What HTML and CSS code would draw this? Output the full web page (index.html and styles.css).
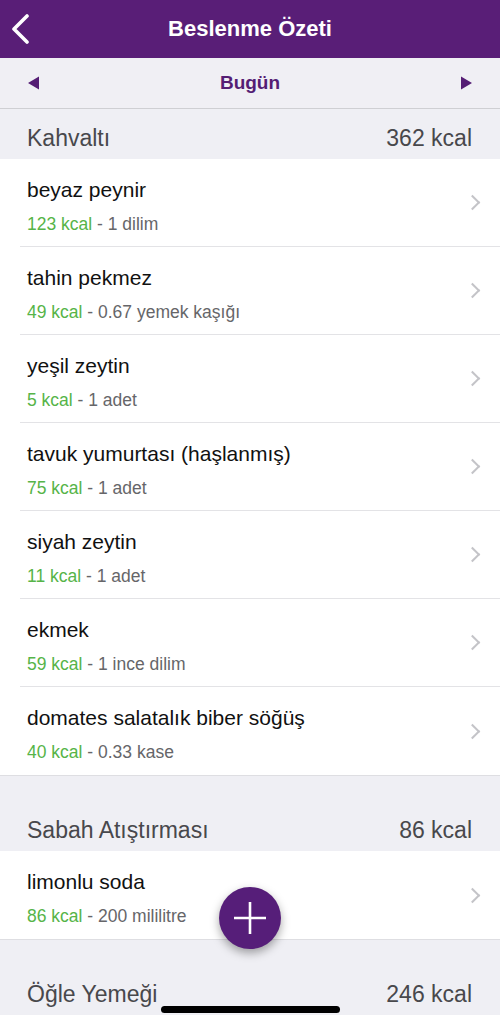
FILE: index.html
```html
<!DOCTYPE html>
<html lang="tr">
<head>
	<meta charset="UTF-8">
	<meta name="viewport" content="width=device-width, initial-scale=1.0">
	<link rel="stylesheet" href="styles.css">
</head>
<body>
	<div id="topbar">
		<a class="back" href="#">
			<svg width="20" height="32" viewBox="0 0 20 32"><path d="M15 2 L2 15 L15 28" fill="none" stroke="#fff" stroke-width="3.6" stroke-linecap="round" stroke-linejoin="round"/></svg>
		</a>
		<h1>Beslenme Özeti</h1>
		<span class="spacer"></span>
	</div>
	<div id="datebar">
		<a class="arrow" href="#"><svg width="12" height="14" viewBox="0 0 12 14"><path d="M0 7 L11 0.5 L11 13.5 Z" fill="#551d74"/></svg></a>
		<span class="day">Bugün</span>
		<a class="arrow" href="#"><svg width="12" height="14" viewBox="0 0 12 14"><path d="M12 7 L1 0.5 L1 13.5 Z" fill="#551d74"/></svg></a>
	</div>

	<div class="meal first">
		<div class="meal-header"><span>Kahvaltı</span><span>362 kcal</span></div>
		<ul class="list">
			<li class="row"><div class="row-inner"><div class="text"><div class="name">beyaz peynir</div><div class="sub"><b>123 kcal</b> - 1 dilim</div></div><span class="chev"></span></div></li>
			<li class="row"><div class="row-inner"><div class="text"><div class="name">tahin pekmez</div><div class="sub"><b>49 kcal</b> - 0.67 yemek kaşığı</div></div><span class="chev"></span></div></li>
			<li class="row"><div class="row-inner"><div class="text"><div class="name">yeşil zeytin</div><div class="sub"><b>5 kcal</b> - 1 adet</div></div><span class="chev"></span></div></li>
			<li class="row"><div class="row-inner"><div class="text"><div class="name">tavuk yumurtası (haşlanmış)</div><div class="sub"><b>75 kcal</b> - 1 adet</div></div><span class="chev"></span></div></li>
			<li class="row"><div class="row-inner"><div class="text"><div class="name">siyah zeytin</div><div class="sub"><b>11 kcal</b> - 1 adet</div></div><span class="chev"></span></div></li>
			<li class="row"><div class="row-inner"><div class="text"><div class="name">ekmek</div><div class="sub"><b>59 kcal</b> - 1 ince dilim</div></div><span class="chev"></span></div></li>
			<li class="row"><div class="row-inner"><div class="text"><div class="name">domates salatalık biber söğüş</div><div class="sub"><b>40 kcal</b> - 0.33 kase</div></div><span class="chev"></span></div></li>
		</ul>
	</div>

	<div class="meal">
		<div class="meal-header"><span>Sabah Atıştırması</span><span>86 kcal</span></div>
		<ul class="list">
			<li class="row"><div class="row-inner"><div class="text"><div class="name">limonlu soda</div><div class="sub"><b>86 kcal</b> - 200 mililitre</div></div><span class="chev"></span></div></li>
		</ul>
	</div>

	<div class="meal">
		<div class="meal-header"><span>Öğle Yemeği</span><span>246 kcal</span></div>
		<ul class="list">
			<li class="row"><div class="row-inner"></div></li>
		</ul>
	</div>

	<a id="add" href="#">
		<svg width="32" height="32" viewBox="0 0 32 32"><path d="M16 0 V32 M0 16 H32" stroke="#fff" stroke-width="2.6"/></svg>
	</a>
	<div id="home"></div>
</body>
</html>
```
FILE: styles.css
```css
body {
	margin: 0;
	height: 1024px;
	overflow: hidden;
	background: #efeff4;
	font-family: 'Liberation Sans', Arial, sans-serif;
	-webkit-font-smoothing: antialiased;
}
a {
	text-decoration: none;
}
#topbar {
	height: 58px;
	background: #591e77;
	display: flex;
	align-items: center;
	padding: 0 12px;
}
#topbar .back {
	width: 40px;
	display: flex;
	align-items: center;
	padding-top: 1px;
}
#topbar .spacer {
	width: 40px;
}
#topbar h1 {
	flex: 1;
	margin: 0;
	text-align: center;
	color: #fff;
	font-size: 22px;
	font-weight: bold;
}
#datebar {
	height: 50px;
	background: #f0eff4;
	border-bottom: 1px solid #cfcfd3;
	display: flex;
	align-items: center;
	justify-content: space-between;
	padding: 0 28px;
}
#datebar .arrow {
	display: flex;
}
#datebar .day {
	color: #551d74;
	font-size: 19px;
	font-weight: bold;
}
.meal {
	margin-top: 25px;
}
.meal.first {
	margin-top: 0;
}
.meal-header {
	height: 50px;
	box-sizing: border-box;
	display: flex;
	justify-content: space-between;
	align-items: flex-end;
	padding: 0 28px 8px 27px;
	color: #48484c;
	font-size: 23px;
	line-height: 26px;
}
.list {
	list-style: none;
	margin: 0;
	padding: 0;
	background: #fff;
	border-bottom: 1px solid #dedee2;
}
.row-inner {
	height: 88px;
	box-sizing: border-box;
	margin-left: 20px;
	padding: 0 22px 0 7px;
	border-bottom: 1px solid #e3e3e6;
	display: flex;
	align-items: center;
}
.row:last-child .row-inner {
	border-bottom: none;
}
.text {
	flex: 1;
	align-self: flex-start;
	padding-top: 17px;
}
.name {
	color: #111;
	font-size: 21px;
	line-height: 28px;
}
.sub {
	margin-top: 9px;
	color: #666669;
	font-size: 17.5px;
	line-height: 22px;
}
.sub b {
	color: #56b448;
	font-weight: normal;
}
.chev {
	width: 9px;
	height: 9px;
	border-top: 2.4px solid #c4c4c8;
	border-right: 2.4px solid #c4c4c8;
	transform: rotate(45deg);
}
#add {
	position: absolute;
	left: 219px;
	top: 887px;
	width: 62px;
	height: 62px;
	border-radius: 50%;
	background: #561e79;
	box-shadow: 0 4px 10px rgba(0,0,0,0.35);
	display: flex;
	align-items: center;
	justify-content: center;
}
#home {
	position: absolute;
	left: 161px;
	top: 1006px;
	width: 179px;
	height: 7px;
	border-radius: 4px;
	background: #000;
}
```
